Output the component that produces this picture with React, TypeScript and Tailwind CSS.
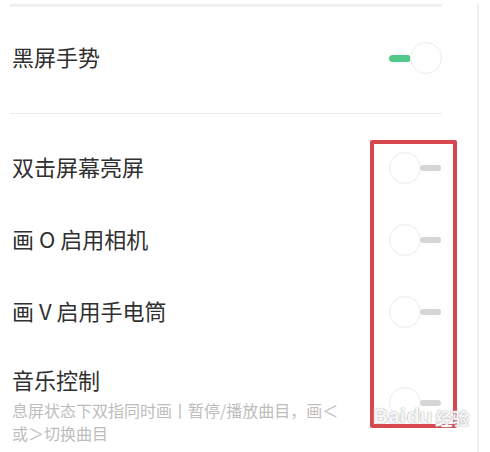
const font = "font-['Noto_Sans_CJK_SC','Noto_Sans',sans-serif]";

function Toggle({ on = false }: { on?: boolean }) {
  const knob = (
    <div className="h-[32px] w-[32px] shrink-0 rounded-full border border-[#ececec] bg-white" />
  );
  return (
    <div className="flex w-[53px] items-center">
      {on ? (
        <>
          <div className="h-[7px] w-[22px] rounded-full bg-[#52c98b]" />
          <div className="-ml-px">{knob}</div>
        </>
      ) : (
        <>
          {knob}
          <div className="-ml-px h-[6px] w-[21px] rounded-full bg-[#d6d6d6]" />
        </>
      )}
    </div>
  );
}

function Row({ title, on }: { title: string; on?: boolean }) {
  return (
    <div className="flex h-[72px] items-center justify-between pl-[12px]">
      <span className="pb-[5px] text-[22px] leading-[30px] text-[#303030]">{title}</span>
      <Toggle on={on} />
    </div>
  );
}

export default function App() {
  return (
    <div className={`relative h-[452px] w-[490px] overflow-hidden bg-white ${font}`}>
      <div className="h-full w-[479px] border-r-2 border-[#f0f0f0]">
        <div className="w-[442px]">
          <div className="ml-[10px] mt-[4px] h-[3px] bg-[#efefef]" />
          <div className="flex h-[102px] items-center justify-between pl-[12px]">
            <span className="pb-[5px] text-[22px] leading-[30px] text-[#303030]">黑屏手势</span>
            <Toggle on />
          </div>
          <div className="ml-[10px] mt-[4px] h-px bg-[#ececec]" />

          <div className="mt-[18px]">
            <Row title="双击屏幕亮屏" />
            <Row title="画 O 启用相机" />
            <Row title="画 V 启用手电筒" />
          </div>

          <div className="flex items-start justify-between pl-[12px] pt-[16px]">
            <div className="w-[342px]">
              <div className="text-[22px] leading-[30px] text-[#303030]">音乐控制</div>
              <p className="mt-[5px] text-[16px] leading-[23px] text-[#bdbdbd]">
                息屏状态下双指同时画丨暂停/播放曲目，画＜或＞切换曲目
              </p>
            </div>
            <div className="mt-[23px]">
              <Toggle />
            </div>
          </div>
        </div>
      </div>

      <div className="absolute left-[370px] top-[140px] h-[288px] w-[87px] rounded-[2px] border-[4px] border-[#d8464f]" />

      <div className="absolute left-[373px] top-[405px] flex items-end text-[21px] font-bold leading-none text-white/90 [text-shadow:0_0_1px_#aaa,0_0_2px_#bbb] font-['Liberation_Sans',sans-serif]">
        <span>Bai</span>
        <span className="ml-[1px]">du</span>
        <span className="ml-[3px] text-[17px] font-['Noto_Sans_CJK_SC',sans-serif]">经验</span>
      </div>
    </div>
  );
}
